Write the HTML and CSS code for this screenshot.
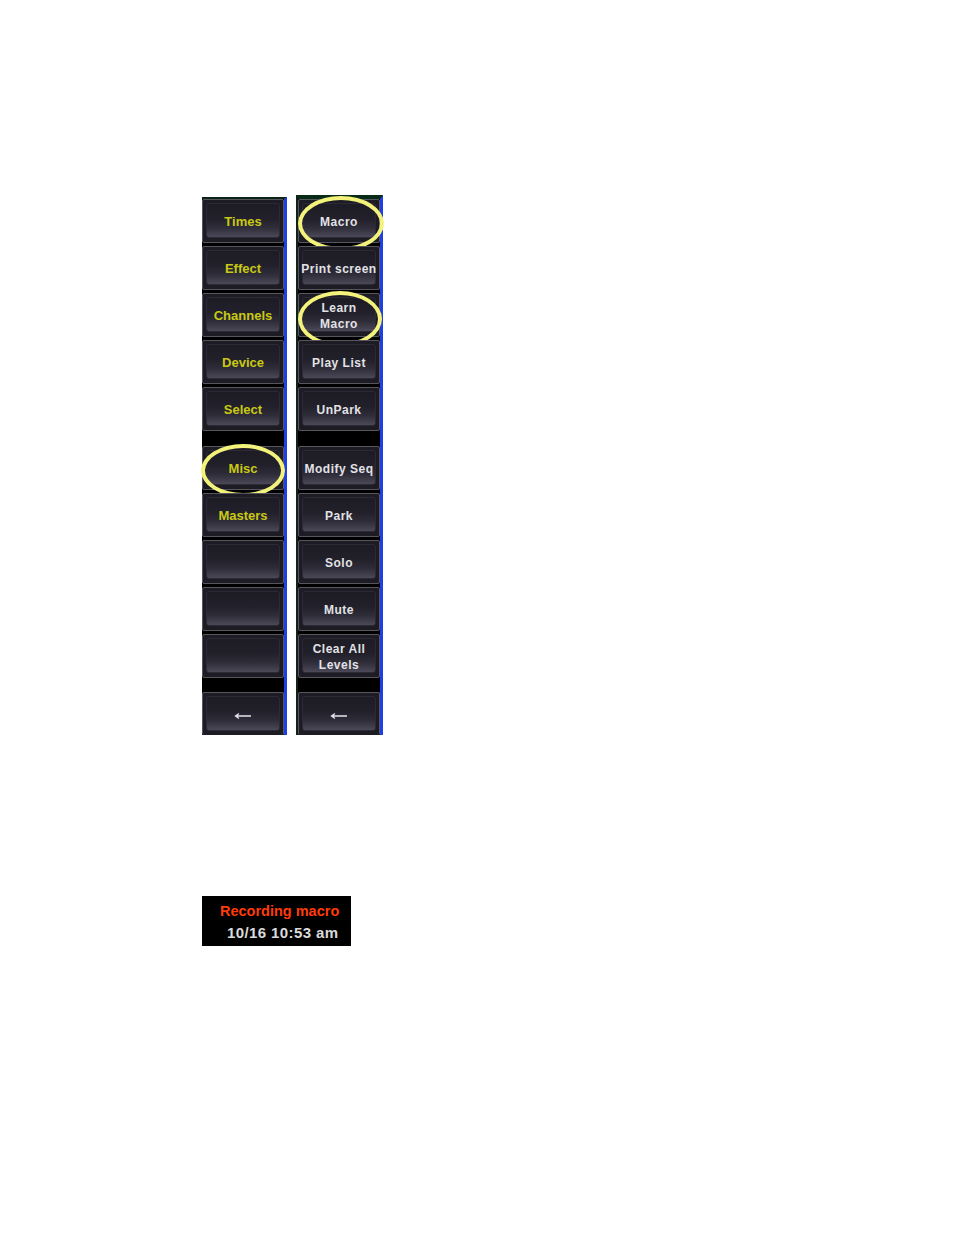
FILE: index.html
```html
<!DOCTYPE html>
<html>
<head>
<meta charset="utf-8">
<link rel="stylesheet" href="styles.css">
</head>
<body>
<div class="page">
  <div class="panels">
    <div class="panel panel-left">
      <div class="group">
        <div class="btn yellow"><div class="face">Times</div></div>
        <div class="btn yellow"><div class="face">Effect</div></div>
        <div class="btn yellow"><div class="face">Channels</div></div>
        <div class="btn yellow"><div class="face">Device</div></div>
        <div class="btn yellow"><div class="face">Select</div></div>
      </div>
      <div class="group">
        <div class="btn yellow"><div class="face">Misc</div><span class="ring ring-misc"></span></div>
        <div class="btn yellow"><div class="face">Masters</div></div>
        <div class="btn"><div class="face"></div></div>
        <div class="btn"><div class="face"></div></div>
        <div class="btn"><div class="face"></div></div>
      </div>
      <div class="group">
        <div class="btn last white"><div class="face"><svg class="arrow" width="18" height="8" viewBox="0 0 18 8"><path d="M17 4H2M5 1.5L1.5 4L5 6.5" fill="none" stroke="#e6e6ea" stroke-width="1.3"/></svg></div></div>
      </div>
    </div>
    <div class="panel panel-right">
      <div class="group">
        <div class="btn white"><div class="face">Macro</div><span class="ring ring-macro"></span></div>
        <div class="btn white"><div class="face">Print screen</div></div>
        <div class="btn white"><div class="face">Learn<br>Macro</div><span class="ring ring-learn"></span></div>
        <div class="btn white"><div class="face">Play List</div></div>
        <div class="btn white"><div class="face">UnPark</div></div>
      </div>
      <div class="group">
        <div class="btn white"><div class="face">Modify Seq</div></div>
        <div class="btn white"><div class="face">Park</div></div>
        <div class="btn white"><div class="face">Solo</div></div>
        <div class="btn white"><div class="face">Mute</div></div>
        <div class="btn white"><div class="face">Clear All<br>Levels</div></div>
      </div>
      <div class="group">
        <div class="btn last white"><div class="face"><svg class="arrow" width="18" height="8" viewBox="0 0 18 8"><path d="M17 4H2M5 1.5L1.5 4L5 6.5" fill="none" stroke="#e6e6ea" stroke-width="1.3"/></svg></div></div>
      </div>
    </div>
  </div>
  <div class="status">
    <div class="rec">Recording macro</div>
    <div class="time">10/16 10:53 am</div>
  </div>
</div>
</body>
</html>
```
FILE: styles.css
```css
html, body {
  margin: 0;
  padding: 0;
  background: #ffffff;
}
.page {
  padding: 195px 0 0 202px;
  font-family: "Liberation Sans", Arial, sans-serif;
}
.panels {
  display: flex;
  align-items: flex-start;
  gap: 9px;
}
.panel {
  background: #000;
  border-right: 3px solid #1f3fe6;
  display: flex;
  flex-direction: column;
}
.panel-left {
  width: 82px;
  margin-top: 2px;
  border-top: 2px solid #0c2416;
  height: 536px;
}
.panel-right {
  width: 82px;
  border-left: 2px solid #0f2418;
  border-top: 4px solid #0a2a18;
  height: 536px;
}
.group {
  display: flex;
  flex-direction: column;
  gap: 3px;
}
.group + .group {
  margin-top: 15px;
}
.group:last-child {
  margin-top: 14px;
}
.btn {
  position: relative;
  height: 44px;
  box-sizing: border-box;
  border: 1px solid #56565c;
  border-radius: 2px;
  background: #1d1c24;
  padding: 3px 3px 4px 3px;
}
.btn.last {
  height: 43px;
  border-bottom: none;
}
.face {
  height: 100%;
  box-sizing: border-box;
  border-radius: 3px;
  border: 1px solid #2c2a34;
  background: linear-gradient(#1d1c25 0%, #22212b 45%, #2e2c38 70%, #4c4858 100%);
  display: flex;
  align-items: center;
  justify-content: center;
  text-align: center;
  font-weight: bold;
  font-size: 13px;
  line-height: 16px;
  white-space: nowrap;
  padding-top: 2px;
}
.yellow .face {
  color: #c9c914;
}
.white .face {
  color: #e2e2e6;
  font-size: 12px;
  letter-spacing: 0.5px;
  line-height: 16px;
}
.arrow {
  display: block;
  margin-top: 2px;
}
.ring {
  position: absolute;
  border: 4px solid #f3f37c;
  border-radius: 50%;
  box-sizing: border-box;
}
.ring-misc {
  left: -2px;
  top: -3px;
  width: 84px;
  height: 53px;
}
.ring-macro {
  left: -1px;
  top: -4px;
  width: 86px;
  height: 55px;
}
.ring-learn {
  left: -1px;
  top: -3px;
  width: 84px;
  height: 56px;
}
.status {
  margin-top: 161px;
  width: 149px;
  height: 50px;
  background: #000;
  box-sizing: border-box;
  padding: 5px 0 0 18px;
  font-weight: bold;
  line-height: 21px;
}
.rec {
  color: #ff3b0a;
  font-size: 14.5px;
}
.time {
  color: #dadada;
  padding-left: 7px;
  font-size: 15px;
  letter-spacing: 0.4px;
}
```
